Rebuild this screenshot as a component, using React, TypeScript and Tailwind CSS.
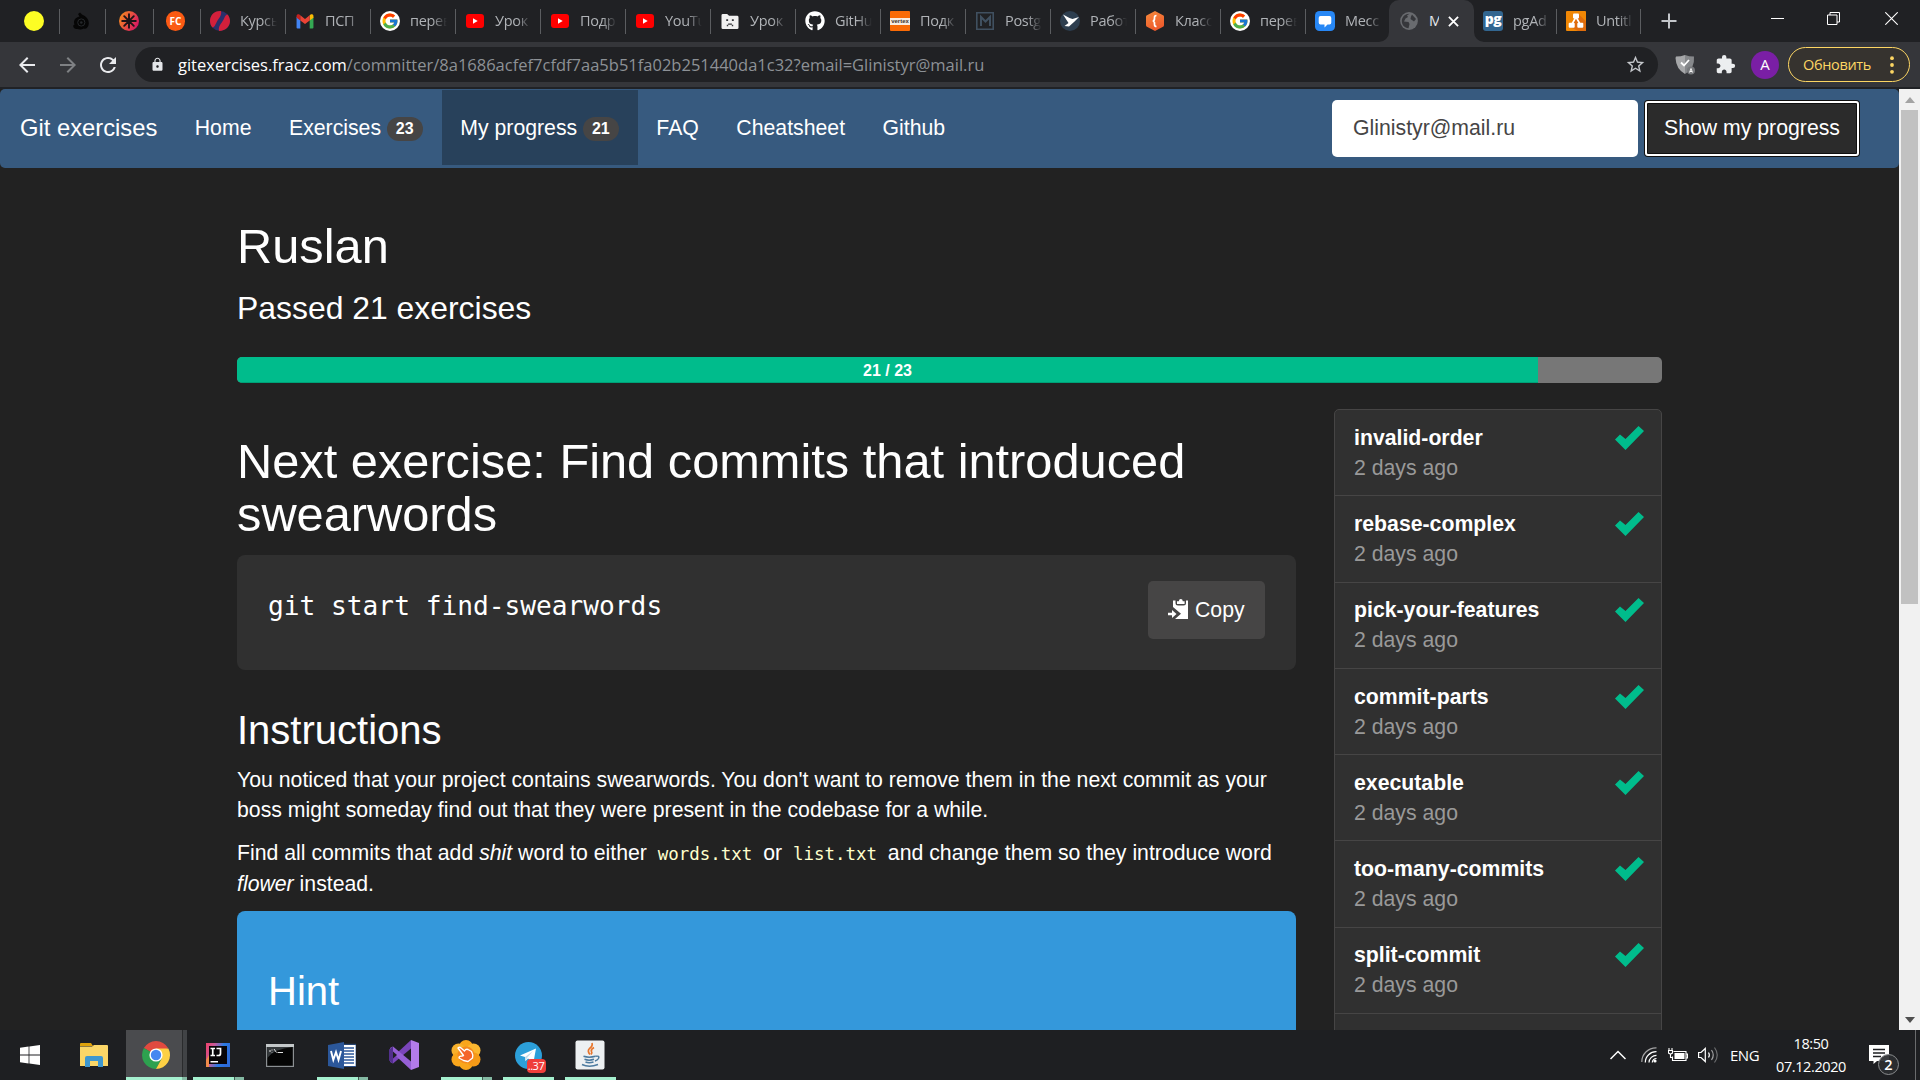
import React from "react";
import { FaGithub } from "react-icons/fa";
import { FcGoogle } from "react-icons/fc";
import { MdArrowBack, MdArrowForward, MdRefresh, MdLock, MdStarBorder, MdExtension } from "react-icons/md";

const UI = "font-['Open_Sans','Noto_Sans',sans-serif]";
const MONO = "font-['DejaVu_Sans_Mono',monospace]";

/* ---------- favicons ---------- */

const YellowDot = () => <span className="block h-5 w-5 rounded-full bg-[#fdfd24]" />;

const DarkSwirl = () => (
  <svg viewBox="0 0 20 20" className="h-5 w-5">
    <path d="M7 3L9 1.500L11 3.500C15 5.500 18 8 17.800 12.500C17.600 16.500 15 18.500 12.500 17.500C10 19 7.500 18.500 6.500 18C4 18.500 2 17 2.200 14.500L3.500 13.500C2 10 4 6.500 8.500 5.500Z" fill="#060606" />
    <circle cx="10.300" cy="11.500" r="3.600" fill="none" stroke="#25282b" strokeWidth="1" />
    <circle cx="10.300" cy="11.500" r="1.300" fill="#25282b" />
  </svg>
);

const Asterisk = () => (
  <svg viewBox="0 0 20 20" className="h-5 w-5">
    <defs>
      <linearGradient id="ast" x1="0" y1="0" x2="1" y2="0.5">
        <stop offset="0.1" stopColor="#f68a1e" />
        <stop offset="1" stopColor="#d81b60" />
      </linearGradient>
    </defs>
    <circle cx="10" cy="10" r="10" fill="url(#ast)" />
    <g stroke="#1d1418" strokeWidth="1.9" strokeLinecap="round">
      <path d="M10 3.200V16.800M3.200 10H16.800M5.200 5.200L14.800 14.800M14.800 5.200L5.200 14.800" />
    </g>
  </svg>
);

const Fc = () => (
  <span className={`flex h-5 w-[19px] items-center justify-center rounded-full bg-[#fb5a13] text-[10px] font-bold leading-none text-white ${UI}`}>
    FC
  </span>
);

const Course = () => (
  <svg viewBox="0 0 20 20" className="h-5 w-5">
    <circle cx="10" cy="10" r="10" fill="#2a2f6b" />
    <path d="M11 .1C4 -.3 0 4.500 0 10C0 12.500 1 15 2.500 16.600C5 16 5.500 13 7 10.500C8.500 7.500 12 5 11 .1Z" fill="#d3203b" />
    <path d="M17.500 3.400C19 5 20 7.500 20 10C20 15.500 15.500 20 9 19.900C8 15 11.500 12.500 13 9.500C14.500 7 15 4 17.500 3.400Z" fill="#d3203b" />
  </svg>
);

const Gmail = () => (
  <svg viewBox="0 0 20 16" className="h-[15px] w-5">
    <path d="M1 3V14.500a1 1 0 0 0 1 1H5V6L1 3Z" fill="#4285f4" />
    <path d="M19 3V14.500a1 1 0 0 1-1 1H15V6L19 3Z" fill="#34a853" />
    <path d="M1 3V2C1 .5 2.800-.3 4 .6L5 1.400V7L1 4Z" fill="#c5221f" />
    <path d="M19 3V2C19 .5 17.200-.3 16 .6L15 1.400V7L19 4Z" fill="#fbbc04" />
    <path d="M5 1.400L10 5.200L15 1.400V7L10 10.700L5 7Z" fill="#ea4335" />
  </svg>
);

const Google = () => (
  <span className="flex h-5 w-5 items-center justify-center rounded-full bg-white">
    <FcGoogle className="h-[18px] w-[18px]" />
  </span>
);

const YouTube = () => (
  <svg viewBox="0 0 18 14" className="h-[14px] w-[18px]">
    <rect width="18" height="14" rx="3" fill="#ff0000" />
    <path d="M7 4.300L11.700 7L7 9.700Z" fill="#fff" />
  </svg>
);

const SadFolder = () => (
  <svg viewBox="0 0 20 18" className="mt-px h-[17px] w-5">
    <path d="M1 2.500Q1 1 2.500 1H7L9 3H17.500Q19 3 19 4.500V15.500Q19 17 17.500 17H2.500Q1 17 1 15.500Z" fill="#f1f1f1" />
    <path d="M6 6.500h2v2h-2zM12 6.500h2v2h-2zM8 11h4v1.400h-4zM6.600 12.400h1.500v1.500h-1.500zM11.900 12.400h1.500v1.500h-1.500z" fill="#35363a" />
  </svg>
);

const GitHub = () => <FaGithub className="h-5 w-5 text-white" />;

const Vertex = () => (
  <span className="flex h-5 w-5 items-center justify-center rounded-[1px] bg-[#f96a06]">
    <span className="flex h-[7px] w-5 items-center justify-center bg-[#f7ece2] text-[6px] font-bold leading-none text-[#3d332c] font-['Liberation_Sans',sans-serif]">
      vertex
    </span>
  </span>
);

const Postgres = () => (
  <svg viewBox="0 0 18 18" className="h-[18px] w-[18px]" fill="none" stroke="#405060" strokeWidth="1.600">
    <path d="M17.200 3.500V.8H.8V17.200H17.200V3.500" />
    <path d="M5 14V5L9.500 9.500L14 5V14" strokeWidth="2" />
  </svg>
);

const Bird = () => (
  <svg viewBox="0 0 20 20" className="h-5 w-5">
    <circle cx="10" cy="10" r="10" fill="#2d3e4f" />
    <path d="M3 3.500L9.500 7L12.500 8L19 6L14 11L9 15.500L4.500 15L8.500 12Z" fill="#fff" />
  </svg>
);

const ClassHex = () => (
  <svg viewBox="0 0 20 20" className="h-5 w-5">
    <defs>
      <linearGradient id="hex" x1="0" y1="0" x2="0.4" y2="1">
        <stop offset="0" stopColor="#f58b3c" />
        <stop offset="1" stopColor="#ee5a2c" />
      </linearGradient>
    </defs>
    <path d="M10 0L18.500 4.600Q19 5 19 6V14Q19 15 18.500 15.400L10 20L1.500 15.400Q1 15 1 14V6Q1 5 1.500 4.600Z" fill="url(#hex)" />
    <path d="M11.500 4.500Q9.300 4.500 9.500 7Q9.700 9.700 7.800 10Q9.700 10.300 9.500 13Q9.300 15.500 11.500 15.500" fill="none" stroke="#fff" strokeWidth="1.700" />
  </svg>
);

const Message = () => (
  <svg viewBox="0 0 20 20" className="h-5 w-5">
    <rect width="20" height="20" rx="4.500" fill="#2787f5" />
    <path d="M5.500 5H14.500Q16.300 5 16.300 7V11.500Q16.300 13.500 14.500 13.500H12.500L9.500 16.500V13.500H5.500Q3.700 13.500 3.700 11.500V7Q3.700 5 5.500 5Z" fill="#fff" />
  </svg>
);

const Globe = () => (
  <svg viewBox="0 0 18 18" className="h-[18px] w-[18px]">
    <circle cx="9" cy="9" r="8.900" fill="#696b6f" />
    <path d="M9.500 1.800L7 3.500L8 5L5.500 6.500L4 9.500L8.500 10L9.500 12L8.500 16.200C4.500 16 1.800 12.800 1.800 9C1.800 5 5 1.800 9.500 1.800Z" fill="#36373b" />
    <path d="M12 2.600L16 7L14 9.500L10.500 7L11 4.500Z" fill="#36373b" />
  </svg>
);

const PgAdmin = () => (
  <span className={`flex h-5 w-5 items-center justify-center rounded-[3px] bg-[#326690] pb-1 text-[14px] font-extrabold leading-none tracking-[-0.5px] text-white ${UI}`}>
    pg
  </span>
);

const Diagram = () => (
  <svg viewBox="0 0 20 20" className="h-5 w-5">
    <rect width="20" height="20" rx="1" fill="#f08705" />
    <path d="M12.500 3L20 10.500V20H12L4 16Z" fill="#df6c0c" />
    <path d="M10 6L5.500 14M10 6L14.500 14" stroke="#fff" strokeWidth="1.600" />
    <rect x="7" y="2.500" width="6" height="5" rx="1" fill="#fff" />
    <rect x="2.700" y="11.700" width="6" height="5" rx="1" fill="#fff" />
    <rect x="11.300" y="11.700" width="6" height="5" rx="1" fill="#fff" />
  </svg>
);

type TabInfo = { icon: React.ReactNode; label: string };
const pinned: { icon: React.ReactNode; cls: string }[] = [
  { icon: <YellowDot />, cls: "w-[60px] pl-6" },
  { icon: <DarkSwirl />, cls: "w-[46px] pl-[11px]" },
  { icon: <Asterisk />, cls: "w-12 pl-[13px]" },
  { icon: <Fc />, cls: "w-[47px] pl-3" },
];
const tabs: TabInfo[] = [
  { icon: <Course />, label: "Курсы" },
  { icon: <Gmail />, label: "ПСП" },
  { icon: <Google />, label: "перев" },
  { icon: <YouTube />, label: "Урок" },
  { icon: <YouTube />, label: "Подр" },
  { icon: <YouTube />, label: "YouTu" },
  { icon: <SadFolder />, label: "Урок" },
  { icon: <GitHub />, label: "GitHu" },
  { icon: <Vertex />, label: "Подк" },
  { icon: <Postgres />, label: "Postg" },
  { icon: <Bird />, label: "Работ" },
  { icon: <ClassHex />, label: "Класс" },
  { icon: <Google />, label: "перев" },
];

const Sep = () => <span className="ml-auto h-[25px] w-px shrink-0 bg-[#5b5d60]" />;

const TabLabel = ({ children }: { children: React.ReactNode }) => (
  <span className="w-[37px] overflow-hidden whitespace-nowrap text-[14.500px] tracking-[-0.3px] text-[#b0b3b7] [mask-image:linear-gradient(to_right,black_60%,transparent)]">
    {children}
  </span>
);

const Tab = ({ icon, label, w = "w-[85px]" }: TabInfo & { w?: string }) => (
  <div className={`flex h-[42px] shrink-0 items-center pl-[9px] ${w}`}>
    <span className="flex w-5 shrink-0 justify-center">{icon}</span>
    <span className="ml-[10px] flex">
      <TabLabel>{label}</TabLabel>
    </span>
    <Sep />
  </div>
);

const TabStrip = () => (
  <div className={`flex h-[42px] items-start bg-[#202124] ${UI}`}>
    {pinned.map((p, i) => (
      <div key={i} className={`flex h-[42px] shrink-0 items-center ${p.cls}`}>
        {p.icon}
        <Sep />
      </div>
    ))}
    {tabs.map((t, i) => (
      <Tab key={i} {...t} />
    ))}
    <div className="flex h-[42px] w-[83px] shrink-0 items-center pl-[9px]">
      <Message />
      <span className="ml-[10px] flex">
        <TabLabel>Месс</TabLabel>
      </span>
    </div>
    <div className="relative flex h-[42px] w-[85px] shrink-0 items-center rounded-t-[10px] bg-[#35363a] pl-[11px]">
      <svg viewBox="0 0 10 10" className="absolute -left-[10px] bottom-0 h-[10px] w-[10px]">
        <path d="M10 0V10H0A10 10 0 0 0 10 0Z" fill="#35363a" />
      </svg>
      <svg viewBox="0 0 10 10" className="absolute -right-[10px] bottom-0 h-[10px] w-[10px]">
        <path d="M0 0V10H10A10 10 0 0 1 0 0Z" fill="#35363a" />
      </svg>
      <Globe />
      <span className="ml-[11px] w-[10px] overflow-hidden text-[14.500px] text-[#e8eaed]">M</span>
      <svg viewBox="0 0 12 12" className="ml-[9px] h-[11px] w-[11px]" stroke="#fff" strokeWidth="2">
        <path d="M1 1L11 11M11 1L1 11" />
      </svg>
    </div>
    <Tab icon={<PgAdmin />} label="pgAd" w="w-[83px]" />
    <Tab icon={<Diagram />} label="Untitl" w="w-[84px]" />
    <div className="flex h-[42px] items-center pl-5">
      <svg viewBox="0 0 16 16" className="h-4 w-4" stroke="#c3c6ca" strokeWidth="2">
        <path d="M8 .5V15.500M.5 8H15.500" />
      </svg>
    </div>
    <div className="ml-auto flex h-[37px] items-center pr-[22px]">
      <span className="mr-[43px] h-px w-[13px] bg-white" />
      <svg viewBox="0 0 13 13" className="mr-[45px] h-[13px] w-[13px]" fill="none" stroke="#fff">
        <path d="M.5 3H10V12.500H.5ZM3 3V.5H12.500V10H10" />
      </svg>
      <svg viewBox="0 0 13 13" className="h-[13px] w-[13px]" stroke="#fff" strokeWidth="1.100">
        <path d="M.3 .3L12.700 12.700M12.700 .3L.3 12.700" />
      </svg>
    </div>
  </div>
);

const Toolbar = () => (
  <div className={`flex h-[45px] items-center bg-[#35363a] ${UI}`}>
    <MdArrowBack className="ml-[15px] h-6 w-6 text-[#e9eaed]" />
    <MdArrowForward className="ml-[17px] h-6 w-6 text-[#7f8184]" />
    <MdRefresh className="ml-4 h-6 w-6 text-[#e9eaed]" />
    <div className="ml-[15px] flex h-[35px] w-[1523px] items-center rounded-full bg-[#202124] pl-[15px] pr-[12px]">
      <MdLock className="h-[15px] w-[15px] text-[#e4e6e9]" />
      <span className="ml-[13px] mt-px whitespace-nowrap text-[16.500px] text-[#8d9196]">
        <span className="text-white">gitexercises.fracz.com</span>
        /committer/8a1686acfef7cfdf7aa5b51fa02b251440da1c32?email=Glinistyr@mail.ru
      </span>
      <MdStarBorder className="ml-auto h-[21px] w-[21px] text-[#c3c6ca]" />
    </div>
    <svg viewBox="0 0 20 20" className="ml-[17px] h-5 w-5">
      <path d="M1 1.500Q6 1.500 10 0V19Q1 14 .5 3Z" fill="#a6a7a9" />
      <path d="M10 0Q14 1.500 19 1.500Q20 14 10 19Z" fill="#86888b" />
      <path d="M6 7.500L9 10.500L14 5" fill="none" stroke="#fff" strokeWidth="1.800" />
      <circle cx="16" cy="15.500" r="4" fill="#77797c" />
      <path d="M14.500 17.500L16 13.500L17.500 17.500M15 16.500H17" fill="none" stroke="#fff" strokeWidth=".9" />
    </svg>
    <MdExtension className="ml-5 h-[21px] w-[21px] text-[#eceef0]" />
    <span className="ml-[15px] flex h-7 w-7 items-center justify-center rounded-full bg-[#7a1fa5] text-[15px] text-white">A</span>
    <div className="ml-[9px] flex h-[35px] w-[122px] items-center justify-between rounded-full border border-[#fdd663] bg-[#36332f] pl-[14px] pr-[15px]">
      <span className="text-[14.500px] tracking-[-0.35px] text-[#fdd663]">Обновить</span>
      <svg viewBox="0 0 4 18" className="h-[18px] w-1" fill="#fdd663">
        <circle cx="2" cy="2.200" r="1.900" />
        <circle cx="2" cy="9" r="1.900" />
        <circle cx="2" cy="15.800" r="1.900" />
      </svg>
    </div>
  </div>
);

/* ---------- page ---------- */

const Badge = ({ children }: { children: React.ReactNode }) => (
  <span className="ml-[5.700px] mt-px flex h-6 w-9 items-center justify-center rounded-[12px] bg-[#464545] text-[16px] font-bold leading-none text-white">
    {children}
  </span>
);

const NavItem = ({ children, active }: { children: React.ReactNode; active?: boolean }) => (
  <div className={`flex h-[75px] items-center px-[18.750px] pt-[2px] ${active ? "bg-[#28415b]" : ""}`}>{children}</div>
);

const NavBar = () => (
  <div className="flex h-[79px] items-start rounded-[5px] bg-[#375a7f] pt-px text-[21.250px] text-white">
    <div className="flex h-[75px] items-center pl-5 pr-[18.750px] text-[23.750px]">Git exercises</div>
    <NavItem>Home</NavItem>
    <NavItem>
      Exercises <Badge>23</Badge>
    </NavItem>
    <NavItem active>
      My progress <Badge>21</Badge>
    </NavItem>
    <NavItem>FAQ</NavItem>
    <NavItem>Cheatsheet</NavItem>
    <NavItem>Github</NavItem>
    <div className="ml-auto mt-[10px] flex items-start pr-[39px]">
      <div className="flex h-[57px] w-[306px] items-center rounded-[5px] bg-white pl-[21px] text-[#464545]">Glinistyr@mail.ru</div>
      <div className="ml-[6px] flex h-[57px] w-[216px] items-center justify-center rounded-[4px] border-2 border-[#101010] bg-[#2b2b2b] shadow-[inset_0_0_0_2px_#101010] outline-2 -outline-offset-3 outline-white">
        Show my progress
      </div>
    </div>
  </div>
);

const Check = () => (
  <svg viewBox="0 0 29 24" className="mt-[3px] h-6 w-[29px]">
    <path d="M0 13.500L5 8.500L10.500 13L23.500 0L29 5L10.500 24Z" fill="#00bc8c" />
  </svg>
);

const done = ["invalid-order", "rebase-complex", "pick-your-features", "commit-parts", "executable", "too-many-commits", "split-commit", ""];

const CodeWord = ({ children }: { children: string }) => (
  <code className={`px-[5px] text-[17.450px] text-[#ffffcc] ${MONO}`}>{children}</code>
);

const Main = () => (
  <div className="mx-auto w-[1425px]">
    <h1 className="mt-[52px] text-[48.750px] leading-[53px]">Ruslan</h1>
    <h3 className="mt-[17px] text-[31.900px] leading-[36px]">Passed 21 exercises</h3>
    <div className="mt-[31px] flex h-[26px] overflow-hidden rounded-[5px] bg-[#777777]">
      <div className="flex w-[91.304%] items-center justify-center bg-[#00bc8c] pt-[2px] text-[16px] font-bold text-white shadow-[inset_0_-1px_0_rgba(0,0,0,0.15)]">
        21 / 23
      </div>
    </div>
    <div className="mt-[26px] flex items-start justify-between">
      <div className="w-[1059px]">
        <h1 className="mt-[26px] text-[48.750px] leading-[53px]">Next exercise: Find commits that introduced swearwords</h1>
        <div className="mt-[14px] flex h-[115px] items-start justify-between rounded-[8px] bg-[#303030] pl-[31px] pr-[31px] pt-[26px]">
          <span className={`mt-[10px] whitespace-pre text-[26.200px] leading-[30px] ${MONO}`}>git start find-swearwords</span>
          <div className="flex h-[58px] w-[117px] items-center rounded-[5px] bg-[#464545] pl-5 text-[21.250px]">
            <svg viewBox="0 0 20 20" className="-mt-0.5 h-5 w-5" fill="#fff">
              <path d="M5 1.500H7.500V4Q7.500 6.500 10 6.500H15.500Q18 6.500 18 4V1.500H20V20H7L13 14.800L5 8Z" />
              <path d="M9 5V2.200H10.800Q11 0 12.800 0Q14.600 0 14.800 2.200H16.600V5Z" />
              <path d="M0 13.800H4V11L8.500 15L4 19V16.200H0Z" />
            </svg>
            <span className="ml-[7px] mt-[2px]">Copy</span>
          </div>
        </div>
        <h2 className="mt-[38px] text-[40px] leading-[44px]">Instructions</h2>
        <p className="mt-[13px] text-[21.250px] leading-[30px]">
          You noticed that your project contains swearwords. You don't want to remove them in the next commit as your boss might someday find out that they were present in the codebase for a while.
        </p>
        <p className="mt-[13px] text-[21.250px] leading-[30px]">
          Find all commits that add <em>shit</em> word to either <CodeWord>words.txt</CodeWord> or <CodeWord>list.txt</CodeWord> and change them so they introduce word <em>flower</em> instead.
        </p>
        <div className="mt-[12px] h-[300px] rounded-[8px] bg-[#3498db] pl-[31px] pt-[58px] text-[40px] leading-[44px]">Hint</div>
      </div>
      <div className="w-[328px] overflow-hidden rounded-t-[5px] border border-[#464545] bg-[#303030] text-[21.250px] leading-[30px]">
        {done.map((name, i) => (
          <div key={i} className="flex h-[86.250px] items-start justify-between border-b border-[#464545] pl-[19px] pr-[17px] pt-[12.800px]">
            {name && (
              <>
                <div>
                  <div className="font-bold">{name}</div>
                  <div className="text-[#999999]">2 days ago</div>
                </div>
                <Check />
              </>
            )}
          </div>
        ))}
      </div>
    </div>
  </div>
);

const ScrollBar = () => (
  <div className="flex w-[21px] shrink-0 flex-col items-center bg-[#f1f1f1]">
    <svg viewBox="0 0 10 6" className="mt-2 h-[6px] w-[10px]">
      <path d="M5 0L10 6H0Z" fill="#a3a3a3" />
    </svg>
    <div className="mt-[7px] h-[494px] w-[17px] bg-[#c1c1c1]" />
    <svg viewBox="0 0 10 6" className="mb-[7px] mt-auto h-[6px] w-[10px]">
      <path d="M0 0H10L5 6Z" fill="#505050" />
    </svg>
  </div>
);

/* ---------- taskbar ---------- */

const WindowsLogo = () => (
  <svg viewBox="0 0 20 20" className="h-5 w-5" fill="#fff">
    <path d="M0 2.800L8.600 1.600V9.600H0ZM9.400 1.500L20 0V9.600H9.400ZM0 10.400H8.600V18.400L0 17.200ZM9.400 10.400H20V20L9.400 18.500Z" />
  </svg>
);

const Folder = () => (
  <svg viewBox="0 0 28 24" className="h-6 w-7">
    <path d="M0 1Q0 0 1 0H11L13 3H0Z" fill="#dfa20b" />
    <path d="M0 3.500H12L14 2H27Q28 2 28 3V23H0Z" fill="#fbd667" />
    <path d="M5 24V15Q5 13 7 13H21Q23 13 23 15V24H18V18H10V24Z" fill="#3f97cf" />
  </svg>
);

const Chrome = () => (
  <svg viewBox="0 0 28 28" className="h-7 w-7">
    <path d="M14 14L1.880 7A14 14 0 0 1 26.120 7Z" fill="#e04a3f" />
    <path d="M14 14L1.880 7A14 14 0 0 0 14 28L20 17Z" fill="#2da14f" />
    <path d="M14 7.500H26.400A14 14 0 0 1 14 28L20 17Z" fill="#fdd044" />
    <circle cx="14" cy="14" r="6.600" fill="#fff" />
    <circle cx="14" cy="14" r="5.200" fill="#4587f0" />
  </svg>
);

const Idea = () => (
  <svg viewBox="0 0 24 24" className="h-6 w-6">
    <defs>
      <linearGradient id="idea" x1="0" y1="0" x2="1" y2="0.3">
        <stop offset="0" stopColor="#f0416b" />
        <stop offset="0.35" stopColor="#c75a9a" />
        <stop offset="0.7" stopColor="#2a7be4" />
        <stop offset="1" stopColor="#2d6bd8" />
      </linearGradient>
    </defs>
    <rect width="24" height="24" fill="url(#idea)" />
    <path d="M0 17L3 12V24H0Z" fill="#ef8a4a" />
    <rect x="3" y="3" width="18" height="18" fill="#080508" />
    <path d="M4.500 5.500H9M6.750 5.500V12M4.500 12.500H9M10.500 5.500H14.500V10.500Q14.500 12.500 12.500 12.500H10.500" fill="none" stroke="#fff" strokeWidth="1.700" />
    <rect x="4.500" y="18" width="7.500" height="1.500" fill="#fff" />
  </svg>
);

const Cmd = () => (
  <svg viewBox="0 0 28 23" className="h-[23px] w-7">
    <rect width="28" height="23" fill="#8c9093" />
    <rect x="0" y="0" width="28" height="3" fill="#c4c8ca" />
    <rect x="1.200" y="3" width="25.600" height="18.800" fill="#050505" />
    <path d="M1.200 3H26.800Q8 5 1.200 14Z" fill="#34383b" />
    <path d="M3 7H5M6 5.500V6.500M6 8V8.500M8 5L10.500 8.500M11.500 8.500H17" stroke="#e3e3e3" />
  </svg>
);

const Word = () => (
  <svg viewBox="0 0 28 27" className="h-[27px] w-7">
    <rect x="13" y="3" width="15" height="21" fill="#fff" />
    <path d="M16 6H26M16 9H26M16 12H26M16 15H26M16 18H26M16 21H26" stroke="#2b579a" strokeWidth="1.300" />
    <path d="M13 2.300H28V24.500H13" fill="none" stroke="#2b579a" strokeWidth=".8" />
    <path d="M0 3L16 0V27L0 24Z" fill="#2b579a" />
    <path d="M3 9L5.300 18L8 10L10.500 18L13 9" fill="none" stroke="#fff" strokeWidth="1.900" />
  </svg>
);

const VisualStudio = () => (
  <svg viewBox="0 0 30 30" className="h-[30px] w-[30px]">
    <path d="M22 0L30 3V27L22 30Z" fill="#b37bea" />
    <path d="M22 0L1 19.500V22L4 23.500L22 8.500Z" fill="#7a45bb" />
    <path d="M22 30L1 10.500V8L4 6.500L22 21.500Z" fill="#9660d6" />
    <path d="M0 9.500L4 6.500V23.500L0 20.500Z" fill="#52308c" />
    <path d="M4 11.500L8 15L4 18.500Z" fill="#1d2024" />
  </svg>
);

const Flower = () => (
  <svg viewBox="0 0 30 30" className="h-[30px] w-[30px]">
    <g fill="#f9a61c">
      <circle cx="15" cy="7" r="7" />
      <circle cx="15" cy="23" r="7" />
      <circle cx="7.500" cy="10.500" r="7" fill="#f7b02c" />
      <circle cx="22.500" cy="10.500" r="7" fill="#fbb730" />
      <circle cx="7.500" cy="19.500" r="7" />
      <circle cx="22.500" cy="19.500" r="7" fill="#f59a17" />
    </g>
    <circle cx="15" cy="15" r="8.500" fill="#f58a1e" />
    <path d="M7 8Q8.500 6.500 10 8L13.500 11Q15 8.500 17 9.500L20.500 11.500Q22.500 15 21.500 18L17 21.500L12.500 20.500L8 18Q8 16 11 16L12.500 15.500Z" fill="#f4662a" stroke="#fff" strokeWidth="1.400" strokeLinejoin="round" />
  </svg>
);

const Telegram = () => (
  <div className="relative h-[27px] w-[27px]">
    <svg viewBox="0 0 27 27" className="h-[27px] w-[27px]">
      <circle cx="13.500" cy="13.500" r="13.500" fill="#2c9fd9" />
      <path d="M5 13.500L21 6.500L18.500 20L13 16.500L10.500 19L10 15Z" fill="#fff" />
      <path d="M10 15L18 9L12 16L10.500 19Z" fill="#c4dcea" />
    </svg>
    <span className={`absolute left-[12px] top-[17px] flex h-[14px] w-[19px] items-center justify-center rounded-[4px] bg-[#ef3e3b] text-[11px] leading-none tracking-[-0.5px] text-white ${UI}`}>
      ..37
    </span>
  </div>
);

const Java = () => (
  <svg viewBox="0 0 30 30" className="h-[30px] w-[30px]">
    <rect x=".5" y=".5" width="29" height="29" rx="2" fill="#edf0f2" />
    <path d="M17 3Q18 6 14.500 8.500Q12 11 15 14.500M19 7.500Q15.500 9.500 16.500 11.500Q17.500 13 16 14.500" fill="none" stroke="#e8762d" strokeWidth="1.700" />
    <g fill="none" stroke="#4c7a9f" strokeWidth="1.500">
      <path d="M8.500 16.300Q14 18 20.500 16.300M9.500 19.300Q14 21 19 19.300M10.500 22Q14 23.500 18.500 22M7 24.500Q14 28 23 24.500" />
      <path d="M20.500 16.300Q25 15.500 23.500 18.500Q22.500 20.300 20 21" />
    </g>
  </svg>
);

type TaskApp = { icon: React.ReactNode; bar?: "one" | "stack"; active?: boolean };
const apps: TaskApp[] = [
  { icon: <Folder /> },
  { icon: <Chrome />, active: true },
  { icon: <Idea />, bar: "stack" },
  { icon: <Cmd /> },
  { icon: <Word />, bar: "stack" },
  { icon: <VisualStudio /> },
  { icon: <Flower />, bar: "stack" },
  { icon: <Telegram />, bar: "one" },
  { icon: <Java />, bar: "one" },
];

const AppSlot = ({ icon, bar, active }: TaskApp) => (
  <div className="relative flex h-[50px] w-[62px] items-center justify-center">
    {active && (
      <span className="absolute inset-y-0 left-px right-0 flex bg-[#4a4b4e]">
        <span className="ml-auto w-[5px] border-l border-[#2a2b2d] bg-[#414346]" />
      </span>
    )}
    <span className="relative">{icon}</span>
    {active && (
      <span className="absolute bottom-0 left-px right-0 flex h-[3px]">
        <span className="flex-1 bg-[#a5f0cf]" />
        <span className="w-[5px] bg-[#84b9a3]" />
      </span>
    )}
    {bar && (
      <span className="absolute bottom-0 left-[6px] right-[5px] flex h-[3px]">
        <span className="flex-1 bg-[#a5f0cf]" />
        {bar === "stack" && <span className="w-[10px] border-l border-[#41594f] bg-[#84b9a3]" />}
      </span>
    )}
  </div>
);

const TaskBar = () => (
  <div className={`flex h-[50px] bg-[#1e1f22] text-white ${UI}`}>
    <div className="flex w-[63px] items-center pl-5">
      <WindowsLogo />
    </div>
    {apps.map((a, i) => (
      <AppSlot key={i} {...a} />
    ))}
    <div className="ml-auto flex items-center">
      <svg viewBox="0 0 16 10" className="h-[10px] w-4" fill="none" stroke="#fff" strokeWidth="1.500">
        <path d="M.5 9L8 1.500L15.500 9" />
      </svg>
      <svg viewBox="0 0 16 16" className="ml-[15px] h-4 w-4" fill="none" stroke="#fff" strokeWidth="1.200">
        <path d="M.8 15A14.200 14.200 0 0 1 15.500 .8" stroke="#a3a3a4" />
        <path d="M4.300 15.500A10.800 10.800 0 0 1 15.500 4.700" />
        <path d="M8 15.500A7.500 7.500 0 0 1 15.500 8.300" />
        <path d="M11.300 15.500A4 4 0 0 1 15.500 11.500" />
        <circle cx="14" cy="14" r="1.600" fill="#fff" stroke="none" />
      </svg>
      <svg viewBox="0 0 20 14" className="ml-[11px] h-[14px] w-5" fill="none" stroke="#fff" strokeWidth="1.100">
        <path d="M5.500 3.500H18V12.500H4.500V8.500M18.500 6H19.500V10H18.500" />
        <rect x="6.500" y="5" width="10" height="6" fill="#fff" stroke="none" />
        <path d="M1 0V2.500M4 0V2.500M.5 2.500H4.500V5Q2.500 7 .5 5ZM2.500 6V9.500H4.500" />
      </svg>
      <svg viewBox="0 0 21 18" className="ml-[10px] h-[18px] w-[21px]" fill="none" stroke="#fff" strokeWidth="1.200">
        <path d="M.6 6.500H3L7.300 2.500V15.500L3 11.500H.6Z" />
        <path d="M10.500 6.500Q12.200 9 10.500 11.500" />
        <path d="M13.500 4Q17 9 13.500 14" stroke="#a3a3a4" />
        <path d="M16.500 1.500Q22 9 16.500 16.500" stroke="#6d6e70" />
      </svg>
      <span className="ml-[11px] w-[30px] text-[15px] tracking-[-0.5px]">ENG</span>
      <div className="ml-[14px] flex w-[74px] flex-col items-center whitespace-nowrap text-[14.500px] leading-[23px] tracking-[-0.4px]">
        <span>18:50</span>
        <span>07.12.2020</span>
      </div>
      <svg viewBox="0 0 30 30" className="ml-[21px] mt-[10px] h-[30px] w-[30px]">
        <path d="M0 0H20V16H8L4.500 19V16H0Z" fill="#fff" />
        <path d="M4 4.500H16M4 8H16M4 11.500H12" stroke="#1e1f22" strokeWidth="1.300" />
        <circle cx="19.500" cy="19.500" r="10" fill="#2b2d30" fillOpacity=".93" stroke="#8a8c8e" />
        <text x="19.500" y="24.800" textAnchor="middle" fontSize="14.500" fontWeight="600" fill="#fff">
          2
        </text>
      </svg>
      <span className="ml-[16px] mr-1 h-[50px] w-px bg-[#6a6b6d]" />
    </div>
  </div>
);

export default function App() {
  return (
    <div className="flex h-[1080px] w-[1920px] flex-col overflow-hidden bg-[#222222] font-['Liberation_Sans',Arial,sans-serif] text-white">
      <TabStrip />
      <Toolbar />
      <div className="h-[2px] shrink-0 bg-[#202226]" />
      <div className="flex h-[941px] shrink-0 overflow-hidden">
        <div className="h-[941px] min-w-0 flex-1 overflow-hidden">
          <NavBar />
          <Main />
        </div>
        <ScrollBar />
      </div>
      <TaskBar />
    </div>
  );
}
